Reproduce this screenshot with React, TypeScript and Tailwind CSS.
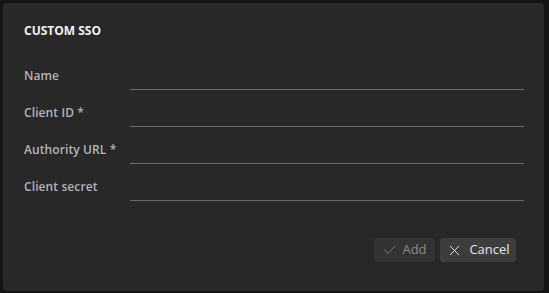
import { Check, X } from 'lucide-react';

const FIELDS = ['Name', 'Client ID *', 'Authority URL *', 'Client secret'];

const Field = ({ label }: { label: string }) => {
  return (
    <div className="flex h-[37px] items-end">
      <label className="w-[106px] shrink-0 pb-[6px] text-[12px] font-semibold leading-[17px] text-[#b4b4b4] tracking-[0.1px]">
        {label}
      </label>
      <input
        className="h-[30px] flex-1 border-b border-[#6a6a6a] bg-transparent text-[13px] text-[#ddd] outline-none"
        type="text"
      />
    </div>
  );
};

const App = () => {
  return (
    <div
      className="min-h-[293px] bg-[#141414] p-[3px] pr-[5px] pb-[2px]"
      style={{ fontFamily: '"Open Sans", "Noto Sans", sans-serif' }}
    >
      <div className="flex h-[288px] flex-col rounded-[4px] bg-[#282828] pl-[21px] pr-[20px] pt-[20px]">
        <h2 className="text-[12px] font-bold leading-[16px] text-[#f2f2f2]">CUSTOM SSO</h2>

        <div className="mt-[14px]">
          {FIELDS.map((field) => (
            <Field key={field} label={field} />
          ))}
        </div>

        <div className="mr-[8px] mt-[37px] flex justify-end gap-[5px]">
          <button
            disabled
            className="flex h-[24px] w-[61px] items-center justify-center gap-[4px] rounded-[3px] bg-[#333333] text-[13px] text-[#8a8a8a]"
          >
            <Check size={16} strokeWidth={1.2} />
            Add
          </button>
          <button className="flex h-[24px] w-[76px] items-center justify-center gap-[6px] rounded-[3px] bg-[#3d3d3d] text-[13px] text-[#e6e6e6]">
            <X size={17} strokeWidth={1.4} />
            Cancel
          </button>
        </div>
      </div>
    </div>
  );
};

export default App;
